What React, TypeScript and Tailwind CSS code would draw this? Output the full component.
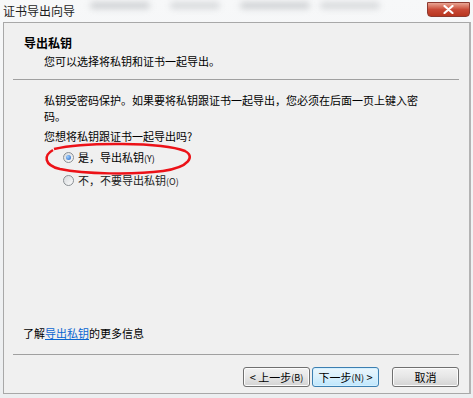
const cjk = "font-['SimSun','Noto_Sans_CJK_SC',sans-serif]";

function Radio({ checked }: { checked?: boolean }) {
  return (
    <span className="flex h-[11px] w-[11px] items-center justify-center rounded-full border border-[#8a8f94] bg-gradient-to-br from-[#d6d9dc] to-[#fbfbfb]">
      {checked && (
        <span className="h-[5px] w-[5px] rounded-full bg-[radial-gradient(circle_at_35%_35%,#9fd0ff,#1f62c4)]" />
      )}
    </span>
  );
}

function WinButton({
  children,
  focused,
}: {
  children: React.ReactNode;
  focused?: boolean;
}) {
  return (
    <button
      className={
        focused
          ? "flex h-[20px] w-[67px] items-center justify-center rounded-[3px] border border-[#3c7fb1] bg-gradient-to-b from-[#eaf6fd] via-[#d9f0fc] to-[#bee6fd] text-[11px] leading-none text-black shadow-[inset_0_0_0_1px_#d4f0ff]"
          : "flex h-[20px] w-[67px] items-center justify-center rounded-[3px] border border-[#707070] bg-gradient-to-b from-[#f2f2f2] via-[#e6e6e6] to-[#d3d3d3] text-[11px] leading-none text-black shadow-[inset_0_0_0_1px_#fcfcfc]"
      }
    >
      {children}
    </button>
  );
}

export default function App() {
  return (
    <div
      className={`flex h-[398px] w-[473px] flex-col overflow-hidden bg-gradient-to-b from-[#f7f8f9] to-[#eceef0] text-black ${cjk}`}
    >
      {/* title bar */}
      <div className="relative flex h-[22px] items-start justify-between">
        <div className="absolute left-[90px] top-[2px] h-[7px] w-[60px] rounded-full bg-[#a9adb1] opacity-50 blur-[3px]" />
        <div className="absolute left-[170px] top-[2px] h-[7px] w-[50px] rounded-full bg-[#a9adb1] opacity-40 blur-[3px]" />
        <div className="absolute left-[240px] top-[2px] h-[7px] w-[70px] rounded-full bg-[#a9adb1] opacity-50 blur-[3px]" />
        <div className="absolute left-[320px] top-[2px] h-[7px] w-[60px] rounded-full bg-[#a9adb1] opacity-40 blur-[3px]" />
        <span className="relative pl-[3px] pt-[4px] text-[12px] leading-[14px] text-[#1e1e1e]">
          证书导出向导
        </span>
        <div className="relative mr-[3px] mt-[2px] flex h-[15px] w-[43px] items-center justify-center rounded-b-[4px] border border-[#8d3a30] bg-gradient-to-b from-[#e8a493] via-[#c94a37] to-[#b8361f]">
          <svg width="11" height="9" viewBox="0 0 11 9">
            <path
              d="M1.5 1 L9.5 8 M9.5 1 L1.5 8"
              stroke="#ffffff"
              strokeWidth="2.2"
              strokeLinecap="round"
            />
          </svg>
        </div>
      </div>

      {/* client area */}
      <div className="mb-[4px] ml-[3px] mr-[2px] flex flex-1 flex-col border border-r-2 border-[#a8a8a8] border-r-[#b3b3b3] bg-[#f0f0f0]">
        <div className="pl-[20px] pt-[12px]">
          <div className="text-[12px] font-bold leading-[16px]">导出私钥</div>
          <div className="mt-[3px] pl-[20px] text-[11px] leading-[14px]">
            您可以选择将私钥和证书一起导出。
          </div>
        </div>
        <div className="ml-[9px] mr-[10px] mt-[11px] h-[2px] border-t border-[#a0a0a0] border-b-white" />

        <div className="relative flex flex-1 flex-col pl-[40px] pt-[11px] text-[11px]">
          <div className="leading-[16px]">
            私钥受密码保护。如果要将私钥跟证书一起导出，您必须在后面一页上键入密
            <br />
            码。
          </div>
          <div className="mt-[6px] leading-[12px]">您想将私钥跟证书一起导出吗?</div>

          <div className="mt-[7px] flex h-[16px] items-center gap-[4px] pl-[19px]">
            <Radio checked />
            <span className="leading-none">
              是，导出私钥<span className="text-[9px]">(Y)</span>
            </span>
          </div>
          <div className="mt-[7px] flex h-[16px] items-center gap-[4px] pl-[19px]">
            <Radio />
            <span className="leading-none text-[#222]">
              不，不要导出私钥<span className="text-[9px]">(O)</span>
            </span>
          </div>

          <svg
            className="absolute left-[40px] top-[61px]"
            width="150"
            height="34"
            viewBox="0 0 150 34"
          >
            <path
              d="M10 7 C40 0 118 0 141 9 C151 14 146 25 119 29 C89 33 40 32 16 27 C-1 23 0 13 9 8"
              fill="none"
              stroke="#ec1218"
              strokeWidth="2.5"
            />
          </svg>
        </div>

        <div className="pl-[19px] text-[11px] leading-[14px]">
          了解<span className="text-[#0b66d0] underline">导出私钥</span>的更多信息
        </div>
        <div className="ml-[9px] mr-[10px] mt-[14px] h-[2px] border-t border-[#a0a0a0] border-b-white" />

        <div className="flex justify-end pb-[6px] pr-[10px] pt-[11px]">
          <WinButton>
            &lt; 上一步<span className="text-[9px]">(B)</span>
          </WinButton>
          <div className="ml-[2px]">
            <WinButton focused>
              下一步<span className="text-[9px]">(N)</span>&nbsp;&gt;
            </WinButton>
          </div>
          <div className="ml-[13px]">
            <WinButton>取消</WinButton>
          </div>
        </div>
      </div>
    </div>
  );
}
